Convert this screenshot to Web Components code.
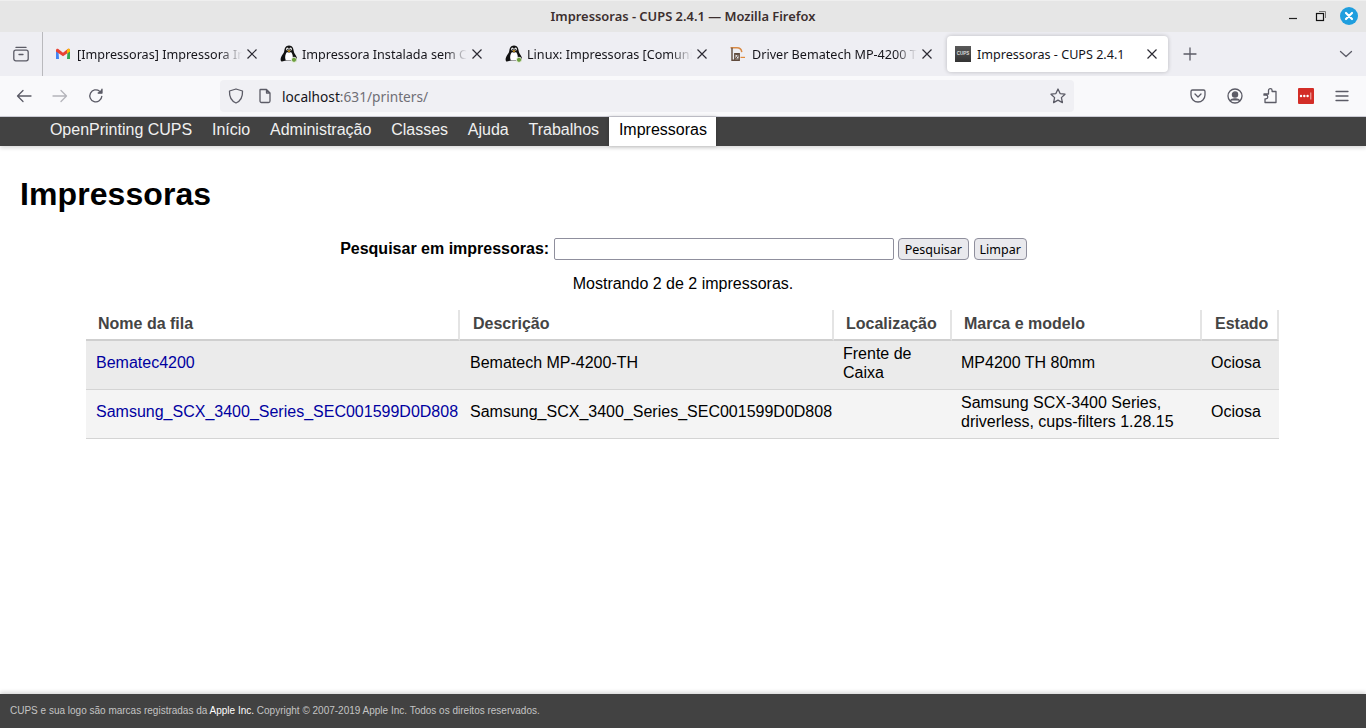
<!DOCTYPE html>
<html lang="pt-BR">
<head>
<meta charset="utf-8">
<title>Impressoras - CUPS 2.4.1</title>
<style>
  html, body { margin: 0; padding: 0; height: 100%; overflow: hidden; background: #fff; }
  body { display: flex; flex-direction: column; font-family: "Liberation Sans", Arial, sans-serif; }
</style>
</head>
<body>
<window-titlebar>Impressoras - CUPS 2.4.1 — Mozilla Firefox</window-titlebar>
<tab-strip>
  <browser-tab icon="gmail">[Impressoras] Impressora In</browser-tab>
  <browser-tab icon="tux">Impressora Instalada sem Co</browser-tab>
  <browser-tab icon="tux">Linux: Impressoras [Comunic</browser-tab>
  <browser-tab icon="bema">Driver Bematech MP-4200 T</browser-tab>
  <browser-tab icon="cups" active>Impressoras - CUPS 2.4.1</browser-tab>
</tab-strip>
<nav-toolbar></nav-toolbar>
<cups-nav></cups-nav>
<cups-page></cups-page>
<cups-footer></cups-footer>

<script>
const ICON = 'fill="none" stroke="#5b5b66" stroke-width="1.3" stroke-linecap="round" stroke-linejoin="round"';

const FAVICONS = {
  gmail: `<svg width="16" height="16" viewBox="0 0 16 16">
    <path d="M1 13V4.6L3.4 3.6 4 13z" fill="#4285f4"/>
    <path d="M15 13V4.6L12.6 3.6 12 13z" fill="#34a853"/>
    <path d="M1 4.2C1 3 2.4 2.4 3.3 3.1L8 6.8 12.7 3.1C13.6 2.4 15 3 15 4.2V5.4L8 10.3 1 5.4z" fill="#ea4335"/>
    <path d="M12 4.2 12.7 3.1C13.6 2.4 15 3 15 4.2V5.4L12 7.5z" fill="#fbbc04"/>
  </svg>`,
  tux: `<svg width="18" height="18" viewBox="0 0 18 18" style="display:block;margin:-1px 0 0 0">
    <path d="M9 0.5C5.600 0.5 4.600 3.400 4.300 6 4 8.400 1.600 10 0.800 13 0.300 15 0.800 16.800 2 16.600L6 15.600H12L15 16.600C16.800 16.600 17.400 14.600 16.800 12.600 16 10 14 8.400 13.700 6 13.400 3.400 12.400 .5 9 .5z" fill="#111"/>
    <path d="M7 7C5.400 9 4.800 11.400 5.400 14.400 6.600 15.600 11.400 15.600 12.600 14.400 13.200 11.400 12.600 9 11 7 10 7.800 8 7.800 7 7z" fill="#fff"/>
    <ellipse cx="7.400" cy="4" rx="1.300" ry="1.600" fill="#fff"/><ellipse cx="10.600" cy="4" rx="1.300" ry="1.600" fill="#fff"/>
    <circle cx="7.700" cy="4.300" r=".6" fill="#000"/><circle cx="10.300" cy="4.300" r=".6" fill="#000"/>
    <path d="M7.400 5.800 9 5.200 10.600 5.800 9 7.200z" fill="#e8a317"/>
    <circle cx="14" cy="14.800" r="2.600" fill="#6d9f3e" stroke="#fff" stroke-width=".8"/>
  </svg>`,
  bema: `<svg width="16" height="16" viewBox="0 0 16 16" fill="none" style="display:block">
    <path d="M0.500 1.800H7C10 1.800 11.500 3.600 11.800 6.200" stroke="#d98a45" stroke-width="1.500"/>
    <path d="M2 1.800V14.300H9.200V7.800H4.800V14.300" stroke="#5f4a3c" stroke-width="1.400"/>
    <path d="M5.500 8.600H8.500L5.500 13H8.800" stroke="#5f4a3c" stroke-width="1"/>
    <path d="M10.500 11.400H15" stroke="#e08a3c" stroke-width="1.200"/>
  </svg>`,
  cups: `<span style="display:flex;align-items:center;justify-content:center;width:16px;height:16px;background:linear-gradient(#5a5a5a,#333);color:#ddd;font:bold 4.5px/16px 'Liberation Sans',sans-serif;overflow:hidden">CUPS</span>`
};

class WindowTitlebar extends HTMLElement {
  connectedCallback() {
    this.attachShadow({ mode: 'open' });
    this.shadowRoot.innerHTML = `
      <style>
        :host {
          display: flex;
          flex: none;
          position: relative;
          align-items: center;
          justify-content: center;
          height: 32px;
          box-sizing: border-box;
          background: #e6e6e6;
          border-top: 1px solid #efefef;
          font: 600 12.9px/1 "Noto Sans", sans-serif;
          color: #3c2f2f;
        }
        .controls {
          position: absolute;
          right: 8px;
          top: 6px;
          display: flex;
          align-items: center;
        }
        svg { display: block; }
      </style>
      <slot></slot>
      <div class="controls">
        <svg width="18" height="18" viewBox="0 0 18 18" style="margin-right:11px"><path d="M4 11.500H12" stroke="#222" stroke-width="1.200"/></svg>
        <svg width="18" height="18" viewBox="0 0 18 18" style="margin-right:8px" fill="none"><rect x="2.500" y="6.500" width="7" height="7" stroke="#111" stroke-width="1.200"/><path d="M5 4.500H11.500V11" stroke="#777" stroke-width="1"/></svg>
        <svg width="18" height="18" viewBox="0 0 18 18"><circle cx="9" cy="9" r="9" fill="#1f9ede"/><path d="M6 6 12 12M12 6 6 12" stroke="#fff" stroke-width="2.200" stroke-linecap="round"/></svg>
      </div>`;
  }
}
customElements.define('window-titlebar', WindowTitlebar);

class TabStrip extends HTMLElement {
  connectedCallback() {
    this.attachShadow({ mode: 'open' });
    this.shadowRoot.innerHTML = `
      <style>
        :host {
          display: flex;
          flex: none;
          align-items: center;
          height: 44px;
          background: #eeeef3;
        }
        .views {
          display: flex;
          align-items: center;
          justify-content: center;
          width: 43px;
          height: 44px;
          box-sizing: border-box;
          border-right: 1px solid #b9b9bd;
          margin-right: 2px;
        }
        .new { width: 16px; margin-left: 12px; display: flex; }
        .list { margin-left: auto; margin-right: 12px; display: flex; }
        svg { display: block; }
      </style>
      <div class="views">
        <svg width="16" height="16" viewBox="0 0 16 16" ${ICON}>
          <rect x="0.800" y="4.200" width="14.400" height="10.600" rx="2"/>
          <path d="M3 1.400H13M6 8.500H10"/>
        </svg>
      </div>
      <slot></slot>
      <div class="new">
        <svg width="16" height="16" viewBox="0 0 16 16" ${ICON}><path d="M8 2V14M2 8H14"/></svg>
      </div>
      <div class="list">
        <svg width="16" height="16" viewBox="0 0 16 16" ${ICON}><path d="M2.500 5.500 8 10.500 13.500 5.500"/></svg>
      </div>`;
  }
}
customElements.define('tab-strip', TabStrip);

class BrowserTab extends HTMLElement {
  connectedCallback() {
    this.attachShadow({ mode: 'open' });
    this.shadowRoot.innerHTML = `
      <style>
        :host {
          display: flex;
          flex: none;
          align-items: center;
          box-sizing: border-box;
          width: 221px;
          height: 36px;
          margin: 0 2px;
          padding: 0 8px;
          border-radius: 4px;
          font: 12.6px/1 "Noto Sans", sans-serif;
          color: #15141a;
        }
        :host([active]) {
          background: #fff;
          box-shadow: 0 0 4px rgba(0, 0, 0, 0.22);
          color: #15141a;
        }
        .fav { flex: none; width: 16px; height: 16px; margin-right: 6px; display: block; }
        .label {
          flex: 1;
          min-width: 0;
          overflow: hidden;
          white-space: nowrap;
          line-height: 16px;
          padding-top: 2px;
          -webkit-mask-image: linear-gradient(to left, transparent 0, #000 22px);
          mask-image: linear-gradient(to left, transparent 0, #000 22px);
        }
        :host([active]) .label { -webkit-mask-image: none; mask-image: none; }
        .close { flex: none; margin: 0 0 0 2px; display: block; }
      </style>
      <span class="fav">${FAVICONS[this.getAttribute('icon')]}</span>
      <span class="label"><slot></slot></span>
      <svg class="close" width="16" height="16" viewBox="0 0 16 16" fill="none" stroke="#2b2a33" stroke-width="1.200"><path d="M3.500 3.500 12.500 12.500M12.500 3.500 3.500 12.500"/></svg>`;
  }
}
customElements.define('browser-tab', BrowserTab);

class NavToolbar extends HTMLElement {
  connectedCallback() {
    this.attachShadow({ mode: 'open' });
    this.shadowRoot.innerHTML = `
      <style>
        :host {
          display: flex;
          flex: none;
          align-items: center;
          box-sizing: border-box;
          height: 41px;
          padding: 0 16px 1px;
          background: #f9f9fb;
          border-bottom: 1px solid #cfcfd8;
        }
        svg { display: block; flex: none; }
        .url {
          display: flex;
          align-items: center;
          box-sizing: border-box;
          width: 854px;
          height: 32px;
          margin-left: 116px;
          padding: 0 8px;
          background: #f0f0f4;
          border-radius: 4px;
          font: 13.7px/1 "Noto Sans", sans-serif;
          color: #15141a;
        }
        .url span { margin-left: 9px; padding-top: 2px; }
        .url em { font-style: normal; color: #6f6e75; }
        .url .star { margin-left: auto; }
        .tools { display: flex; align-items: center; margin-left: auto; gap: 20px; }
      </style>
      <svg width="16" height="16" viewBox="0 0 16 16" ${ICON}><path d="M15 8H1.500M7 2.500 1.500 8 7 13.500"/></svg>
      <svg style="margin-left:20px" width="16" height="16" viewBox="0 0 16 16" fill="none" stroke="#b4b4ba" stroke-width="1.300" stroke-linecap="round" stroke-linejoin="round"><path d="M1 8H14.500M9 2.500 14.500 8 9 13.500"/></svg>
      <svg style="margin-left:20px" width="16" height="16" viewBox="0 0 16 16" ${ICON}><path d="M13.800 8.400A6 6 0 1 1 11.600 3.200"/><path d="M14 1V5.200H9.800" fill="#5b5b66" stroke="none"/><path d="M14 1.200V5H10.200"/></svg>
      <div class="url">
        <svg width="16" height="16" viewBox="0 0 16 16" ${ICON}><path d="M8 1 14.500 3C14.800 8.500 12.500 13 8 15 3.500 13 1.200 8.500 1.500 3z"/></svg>
        <svg style="margin-left:13px" width="16" height="16" viewBox="0 0 16 16" ${ICON}><path d="M3.500 1.500H9.500L13 5V13A1.500 1.500 0 0 1 11.500 14.500H4.500A1.500 1.500 0 0 1 3 13V2A.5 .5 0 0 1 3.500 1.500zM9.500 1.500V5H13"/></svg>
        <span>localhost<em>:631/printers/</em></span>
        <svg class="star" width="16" height="16" viewBox="0 0 16 16" ${ICON}><path d="M8 1 10.100 5.600 15 6.200 11.400 9.600 12.400 14.600 8 12.100 3.600 14.600 4.600 9.600 1 6.200 5.900 5.600z"/></svg>
      </div>
      <div class="tools">
        <svg width="16" height="16" viewBox="0 0 16 16" ${ICON}><path d="M2.500 2H13.500A1.500 1.500 0 0 1 15 3.500V7A7 7 0 0 1 1 7V3.500A1.500 1.500 0 0 1 2.500 2z"/><path d="M5 6 8 9 11 6"/></svg>
        <svg width="16" height="16" viewBox="0 0 16 16" ${ICON} style="margin-left:1px;margin-right:-1px"><circle cx="8" cy="8" r="7"/><circle cx="8" cy="6.500" r="2.600" fill="#5b5b66"/><path d="M3.500 12.500C4.500 10.300 11.500 10.300 12.500 12.500" fill="#5b5b66"/></svg>
        <svg width="16" height="16" viewBox="0 0 16 16" ${ICON}><path d="M6 3.500V2.500A1.800 1.800 0 0 1 9.600 2.500V3.500H13.500V14.500H2.500V10.800H3.500A1.800 1.800 0 0 0 3.500 7.200H1.500V6H6z" transform="translate(.5 0)"/></svg>
        <svg width="16" height="16" viewBox="0 0 16 16"><rect width="16" height="16" rx="1" fill="#d32d27"/><g fill="#fff"><circle cx="3" cy="8" r="1.200"/><circle cx="6.300" cy="8" r="1.200"/><circle cx="9.600" cy="8" r="1.200"/></g><path d="M12.800 4.500V11.500" stroke="#f2b9b6" stroke-width="1"/></svg>
        <svg width="16" height="16" viewBox="0 0 16 16" ${ICON}><path d="M2 3.500H14M2 8H14M2 12.500H14"/></svg>
      </div>`;
  }
}
customElements.define('nav-toolbar', NavToolbar);

class CupsNav extends HTMLElement {
  connectedCallback() {
    this.attachShadow({ mode: 'open' });
    const items = ['OpenPrinting CUPS', 'Início', 'Administração', 'Classes', 'Ajuda', 'Trabalhos', 'Impressoras'];
    this.shadowRoot.innerHTML = `
      <style>
        :host {
          display: flex;
          flex: none;
          height: 29px;
          padding-left: 40px;
          background: #424242;
          box-shadow: 0 2px 4px rgba(0, 0, 0, 0.15);
          font: 16px/25px "Liberation Sans", Arial, sans-serif;
          position: relative;
        }
        a {
          display: block;
          padding: 0 9.900px;
          color: #f0f0f0;
          text-decoration: none;
        }
        a:first-child { padding-left: 10px; }
        a.active { padding-right: 9px; background: #fff; color: #000; box-shadow: 0 0 4px rgba(0, 0, 0, 0.2); }
      </style>
      ${items.map((t, i) => `<a href="#" class="${i === items.length - 1 ? 'active' : ''}">${t}</a>`).join('')}`;
  }
}
customElements.define('cups-nav', CupsNav);

class PrinterTable extends HTMLElement {
  connectedCallback() {
    this.attachShadow({ mode: 'open' });
    const head = ['Nome da fila', 'Descrição', 'Localização', 'Marca e modelo', 'Estado'];
    const rows = [
      ['Bematec4200', 'Bematech MP-4200-TH', 'Frente de Caixa', 'MP4200 TH 80mm', 'Ociosa'],
      ['Samsung_SCX_3400_Series_SEC001599D0D808', 'Samsung_SCX_3400_Series_SEC001599D0D808', '', 'Samsung SCX-3400 Series, driverless, cups-filters 1.28.15', 'Ociosa']
    ];
    this.shadowRoot.innerHTML = `
      <style>
        :host { display: block; width: 1193px; margin-left: 86px; }
        .row {
          display: grid;
          grid-template-columns: 374px 374px 118px 250px 77px;
        }
        .th {
          box-sizing: border-box;
          height: 31px;
          padding: 5px 0 0 12px;
          border-right: 2px solid #e4e4e4;
          border-bottom: 2px solid #cfcfcf;
          font-weight: bold;
          line-height: 18px;
          color: #444;
          white-space: nowrap;
        }
        .th:nth-child(2), .th:nth-child(5) { padding-left: 13px; }
        .body { height: 49px; box-sizing: border-box; border-bottom: 1px solid #d4d4d4; background: #f4f4f4; }
        .row.first { background: #ebebeb; }
        .td {
          display: flex;
          align-items: center;
          padding: 0 10px 5px;
          line-height: 19px;
          color: #000;
          white-space: normal;
        }
        .td:nth-child(3), .td:nth-child(4), .td:nth-child(5) { padding-left: 9px; }
        .td.nowrap { white-space: nowrap; }
        a { color: #0000a0; text-decoration: none; }
      </style>
      <div class="row">${head.map(h => `<div class="th">${h}</div>`).join('')}</div>
      ${rows.map((r, n) => `<div class="row body ${n === 0 ? 'first' : ''}">
        ${r.map((c, i) => `<div class="td ${i < 2 ? 'nowrap' : ''}">${i === 0 ? `<a href="#">${c}</a>` : c}</div>`).join('')}
      </div>`).join('')}`;
  }
}
customElements.define('printer-table', PrinterTable);

class CupsPage extends HTMLElement {
  connectedCallback() {
    this.attachShadow({ mode: 'open' });
    this.shadowRoot.innerHTML = `
      <style>
        :host {
          display: block;
          flex: 1;
          min-height: 0;
          font: 16px/18px "Liberation Sans", Arial, sans-serif;
          color: #000;
          background: #fff;
        }
        h1 { margin: 0; padding: 30px 20px 0; font-size: 32px; line-height: 37px; font-weight: bold; letter-spacing: .08px; }
        form {
          display: flex;
          justify-content: center;
          align-items: center;
          margin-top: 25px;
          padding-left: 1px;
          height: 22px;
        }
        label { font-weight: bold; margin-right: 5px; }
        input {
          box-sizing: border-box;
          width: 340px;
          height: 22px;
          margin: 0 4px 0 0;
          padding: 1px 2px;
          border: 1px solid #8f8f9d;
          border-radius: 2px;
          background: #fff;
        }
        button {
          box-sizing: border-box;
          height: 22px;
          margin: 0 5px 0 0;
          padding: 2px 5.500px 0;
          border: 1px solid #8f8f9d;
          border-radius: 4px;
          background: #e9e9ed;
          color: #000;
          font: 12.5px/1 "Noto Sans", sans-serif;
        }
        button:last-child { margin-right: 0; padding: 2px 5px 0; }
        p { margin: 15px 0 17px; text-align: center; }
      </style>
      <h1>Impressoras</h1>
      <form onsubmit="return false">
        <label>Pesquisar em impressoras:</label>
        <input type="search">
        <button>Pesquisar</button>
        <button>Limpar</button>
      </form>
      <p>Mostrando 2 de 2 impressoras.</p>
      <printer-table></printer-table>`;
  }
}
customElements.define('cups-page', CupsPage);

class CupsFooter extends HTMLElement {
  connectedCallback() {
    this.attachShadow({ mode: 'open' });
    this.shadowRoot.innerHTML = `
      <style>
        :host {
          display: flex;
          flex: none;
          align-items: center;
          height: 34px;
          padding-left: 10px;
          background: #424242;
          box-shadow: 0 -2px 4px rgba(0, 0, 0, 0.15);
          font: 10px/1 "Liberation Sans", Arial, sans-serif;
          color: #c4c4c4;
          position: relative;
        }
        a { color: #fff; text-decoration: none; }
      </style>
      <span>CUPS e sua logo são marcas registradas da <a href="#">Apple Inc.</a> Copyright © 2007-2019 Apple Inc. Todos os direitos reservados.</span>`;
  }
}
customElements.define('cups-footer', CupsFooter);
</script>
</body>
</html>
